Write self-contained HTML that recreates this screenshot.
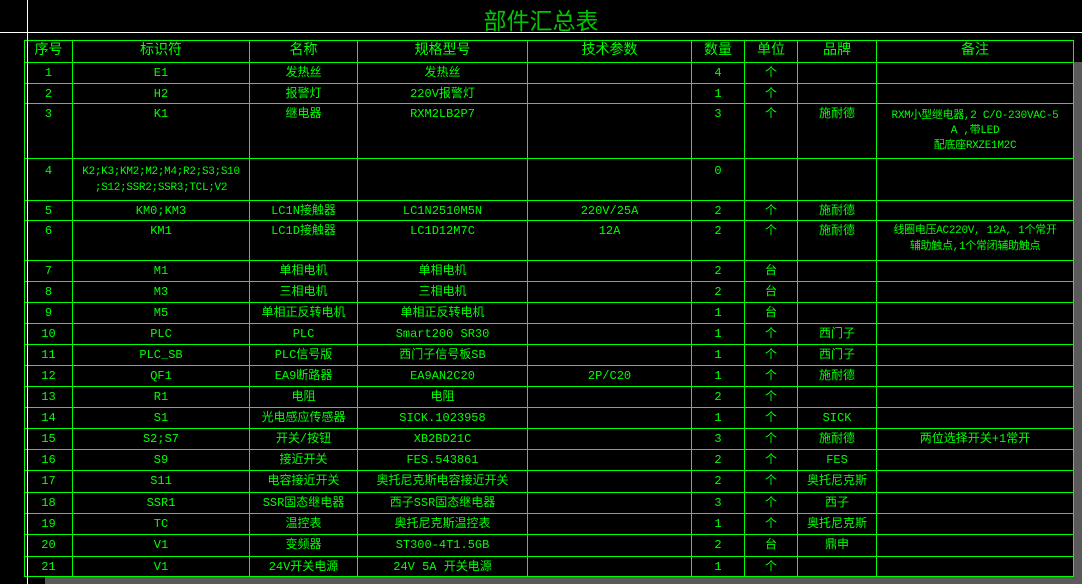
<!DOCTYPE html>
<html><head><meta charset="utf-8"><style>
html,body{margin:0;padding:0;background:#000;width:1082px;height:584px;overflow:hidden;position:relative;font-family:"Liberation Mono","Noto Sans CJK SC",monospace;}
.title{position:absolute;left:0;width:1082px;top:6px;text-align:center;font-size:23px;color:#00c800;line-height:30px;font-family:"Liberation Sans","Noto Sans CJK SC",sans-serif;}
.vl{position:absolute;left:27px;top:0;width:1px;height:584px;background:#fff;}
.hl{position:absolute;left:0;top:32px;width:1082px;height:1px;background:#fff;}
table{position:absolute;left:24px;top:40px;border-collapse:collapse;table-layout:fixed;color:#00ff00;font-size:12px;}
td{border:1px solid #00ff00;padding:0;text-align:center;vertical-align:top;line-height:17px;padding-top:2px;white-space:nowrap;overflow:hidden;}
tr.h td{font-size:14px;line-height:19px;padding-top:1px;}
.sb{position:absolute;left:1074px;top:62px;width:8px;height:515px;background:#5a5a5a;}
.bb{position:absolute;left:45px;top:577px;width:1037px;height:7px;background:#5a5a5a;}
.sm{font-size:11px;letter-spacing:-0.3px;line-height:16px;}
</style></head><body>
<div class="title">部件汇总表</div>
<table>
<colgroup><col style="width:48px"><col style="width:177px"><col style="width:108px"><col style="width:170px"><col style="width:164px"><col style="width:53px"><col style="width:53px"><col style="width:79px"><col style="width:197px"></colgroup>
<tr class="h" style="height:22px"><td>序号</td><td>标识符</td><td>名称</td><td>规格型号</td><td>技术参数</td><td>数量</td><td>单位</td><td>品牌</td><td>备注</td></tr>
<tr style="height:21px"><td>1</td><td>E1</td><td>发热丝</td><td>发热丝</td><td></td><td>4</td><td>个</td><td></td><td></td></tr>
<tr style="height:20px"><td>2</td><td>H2</td><td>报警灯</td><td>220V报警灯</td><td></td><td>1</td><td>个</td><td></td><td></td></tr>
<tr style="height:55px"><td>3</td><td>K1</td><td>继电器</td><td>RXM2LB2P7</td><td></td><td>3</td><td>个</td><td>施耐德</td><td class="sm" style="line-height:15px;padding-top:5px">RXM小型继电器,2 C/O-230VAC-5<br>A ,带LED<br>配底座RXZE1M2C</td></tr>
<tr style="height:42px"><td style="padding-top:4px">4</td><td class="sm" style="padding-top:5px">K2;K3;KM2;M2;M4;R2;S3;S10<br>;S12;SSR2;SSR3;TCL;V2</td><td></td><td></td><td></td><td style="padding-top:4px">0</td><td></td><td></td><td></td></tr>
<tr style="height:20px"><td>5</td><td>KM0;KM3</td><td>LC1N接触器</td><td>LC1N2510M5N</td><td>220V/25A</td><td>2</td><td>个</td><td>施耐德</td><td></td></tr>
<tr style="height:40px"><td>6</td><td>KM1</td><td>LC1D接触器</td><td>LC1D12M7C</td><td>12A</td><td>2</td><td>个</td><td>施耐德</td><td class="sm">线圈电压AC220V, 12A, 1个常开<br>辅助触点,1个常闭辅助触点</td></tr>
<tr style="height:21px"><td>7</td><td>M1</td><td>单相电机</td><td>单相电机</td><td></td><td>2</td><td>台</td><td></td><td></td></tr>
<tr style="height:21px"><td>8</td><td>M3</td><td>三相电机</td><td>三相电机</td><td></td><td>2</td><td>台</td><td></td><td></td></tr>
<tr style="height:21px"><td>9</td><td>M5</td><td>单相正反转电机</td><td>单相正反转电机</td><td></td><td>1</td><td>台</td><td></td><td></td></tr>
<tr style="height:21px"><td>10</td><td>PLC</td><td>PLC</td><td>Smart200 SR30</td><td></td><td>1</td><td>个</td><td>西门子</td><td></td></tr>
<tr style="height:21px"><td>11</td><td>PLC_SB</td><td>PLC信号版</td><td>西门子信号板SB</td><td></td><td>1</td><td>个</td><td>西门子</td><td></td></tr>
<tr style="height:21px"><td>12</td><td>QF1</td><td>EA9断路器</td><td>EA9AN2C20</td><td>2P/C20</td><td>1</td><td>个</td><td>施耐德</td><td></td></tr>
<tr style="height:21px"><td>13</td><td>R1</td><td>电阻</td><td>电阻</td><td></td><td>2</td><td>个</td><td></td><td></td></tr>
<tr style="height:21px"><td>14</td><td>S1</td><td>光电感应传感器</td><td>SICK.1023958</td><td></td><td>1</td><td>个</td><td>SICK</td><td></td></tr>
<tr style="height:21px"><td>15</td><td>S2;S7</td><td>开关/按钮</td><td>XB2BD21C</td><td></td><td>3</td><td>个</td><td>施耐德</td><td>两位选择开关+1常开</td></tr>
<tr style="height:21px"><td>16</td><td>S9</td><td>接近开关</td><td>FES.543861</td><td></td><td>2</td><td>个</td><td>FES</td><td></td></tr>
<tr style="height:22px"><td>17</td><td>S11</td><td>电容接近开关</td><td>奥托尼克斯电容接近开关</td><td></td><td>2</td><td>个</td><td>奥托尼克斯</td><td></td></tr>
<tr style="height:21px"><td>18</td><td>SSR1</td><td>SSR固态继电器</td><td>西子SSR固态继电器</td><td></td><td>3</td><td>个</td><td>西子</td><td></td></tr>
<tr style="height:21px"><td>19</td><td>TC</td><td>温控表</td><td>奥托尼克斯温控表</td><td></td><td>1</td><td>个</td><td>奥托尼克斯</td><td></td></tr>
<tr style="height:22px"><td>20</td><td>V1</td><td>变频器</td><td>ST300-4T1.5GB</td><td></td><td>2</td><td>台</td><td>鼎申</td><td></td></tr>
<tr style="height:20px"><td>21</td><td>V1</td><td>24V开关电源</td><td>24V 5A 开关电源</td><td></td><td>1</td><td>个</td><td></td><td></td></tr>
</table>
<div class="vl"></div><div class="hl"></div>
<div class="sb"></div><div class="bb"></div>
</body></html>
